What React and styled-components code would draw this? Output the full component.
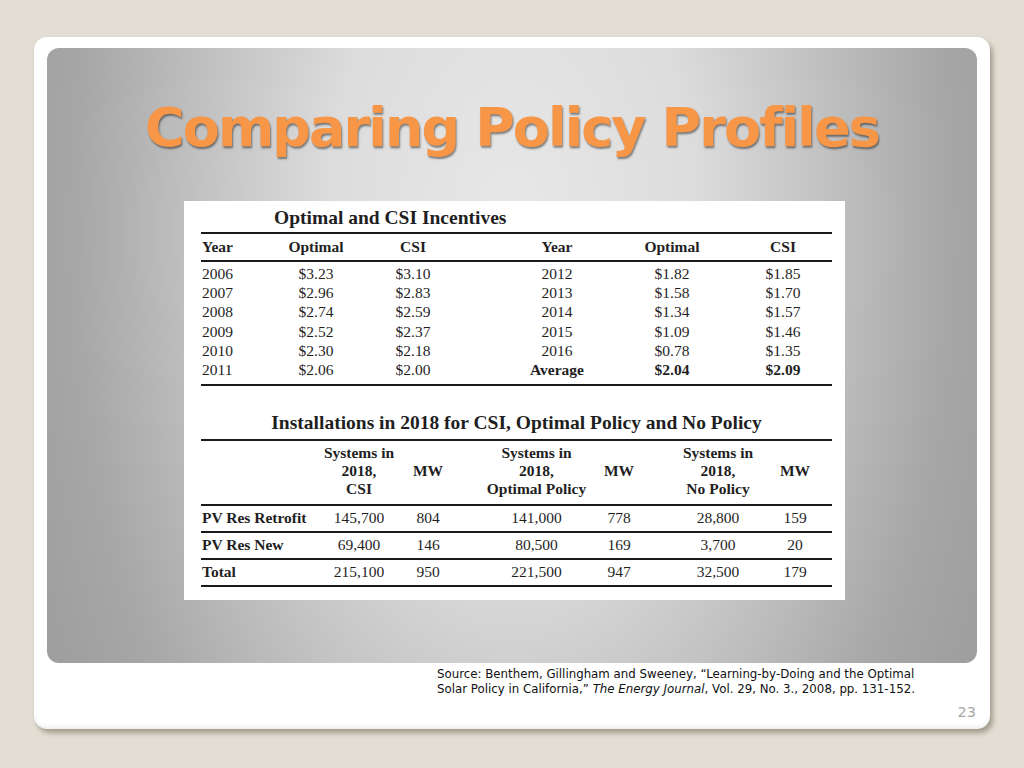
import React from 'react';
import styled, { createGlobalStyle } from 'styled-components';

// left edge of the table rules, page coordinates
const X0 = 201;

// grid template with spacer tracks so every centred column sits on its own centre
const buildGrid = (labelW, cols) => {
    const parts = [`${labelW}px`];
    const index = [];
    let x = X0 + labelW;
    let track = 1;
    cols.forEach(({ c, w }) => {
        const start = c - w / 2;
        if (start - x > 0) {
            parts.push(`${start - x}px`);
            track++;
        }
        parts.push(`${w}px`);
        track++;
        index.push(track);
        x = start + w;
    });
    return { template: parts.join(' ') + ' 1fr', index };
};

const incentiveGrid = buildGrid(75, [
    { c: 316, w: 80 },
    { c: 413, w: 80 },
    { c: 557, w: 80 },
    { c: 672, w: 80 },
    { c: 783, w: 80 },
]);

const installGrid = buildGrid(122, [
    { c: 359, w: 72 },
    { c: 428, w: 60 },
    { c: 536.5, w: 104 },
    { c: 619, w: 60 },
    { c: 718, w: 76 },
    { c: 795, w: 60 },
]);

const incentives = [
    ['2006', '$3.23', '$3.10', '2012', '$1.82', '$1.85'],
    ['2007', '$2.96', '$2.83', '2013', '$1.58', '$1.70'],
    ['2008', '$2.74', '$2.59', '2014', '$1.34', '$1.57'],
    ['2009', '$2.52', '$2.37', '2015', '$1.09', '$1.46'],
    ['2010', '$2.30', '$2.18', '2016', '$0.78', '$1.35'],
    ['2011', '$2.06', '$2.00', 'Average', '$2.04', '$2.09'],
];

const installs = [
    ['PV Res Retrofit', '145,700', '804', '141,000', '778', '28,800', '159'],
    ['PV Res New', '69,400', '146', '80,500', '169', '3,700', '20'],
    ['Total', '215,100', '950', '221,500', '947', '32,500', '179'],
];

const App = () => {
    return (
        <>
            <GlobalStyle />
            <Page>
                <Card>
                    <Panel>
                        <Title>Comparing Policy Profiles</Title>
                        <TableBox>
                            <Caption $indent="73px">Optimal and CSI Incentives</Caption>
                            <Row $cols={incentiveGrid.template} $h="26px" $top $bottom>
                                <Label $bold>Year</Label>
                                {['Optimal', 'CSI', 'Year', 'Optimal', 'CSI'].map((h, i) => (
                                    <Cell key={i} $col={incentiveGrid.index[i]} $bold>
                                        {h}
                                    </Cell>
                                ))}
                            </Row>
                            <Body>
                                {incentives.map((r, ri) => (
                                    <Row key={ri} $cols={incentiveGrid.template} $h="19.2px">
                                        <Label>{r[0]}</Label>
                                        {r.slice(1).map((v, i) => (
                                            <Cell key={i} $col={incentiveGrid.index[i]} $bold={ri === 5 && i >= 2}>
                                                {v}
                                            </Cell>
                                        ))}
                                    </Row>
                                ))}
                            </Body>

                            <Caption $gap="27px" $mb="6px" $center>
                                Installations in 2018 for CSI, Optimal Policy and No Policy
                            </Caption>
                            <Row $cols={installGrid.template} $h="54px" $top $bottom $pad="3px 0 6px">
                                {[
                                    ['Systems in', '2018,', 'CSI'],
                                    ['MW'],
                                    ['Systems in', '2018,', 'Optimal Policy'],
                                    ['MW'],
                                    ['Systems in', '2018,', 'No Policy'],
                                    ['MW'],
                                ].map((lines, i) => (
                                    <Cell key={i} $col={installGrid.index[i]} $bold $lh="18px">
                                        {lines.map((l, li) => (
                                            <div key={li}>{l}</div>
                                        ))}
                                    </Cell>
                                ))}
                            </Row>
                            {installs.map((r, ri) => (
                                <Row key={ri} $cols={installGrid.template} $h="25px" $bottom>
                                    <Label $bold>{r[0]}</Label>
                                    {r.slice(1).map((v, i) => (
                                        <Cell key={i} $col={installGrid.index[i]}>
                                            {v}
                                        </Cell>
                                    ))}
                                </Row>
                            ))}
                        </TableBox>
                    </Panel>
                    <Footer>
                        <Source>
                            Source: Benthem, Gillingham and Sweeney, “Learning-by-Doing and the Optimal
                            <br />
                            Solar Policy in California,” <em>The Energy Journal</em>, Vol. 29, No. 3., 2008, pp. 131-152.
                        </Source>
                        <SlideNo>23</SlideNo>
                    </Footer>
                </Card>
            </Page>
        </>
    );
};

export default App;

const GlobalStyle = createGlobalStyle`
    body {
        margin: 0;
        background: #e2ded3;
    }
`;

const Page = styled.div`
    width: 1024px;
    height: 768px;
    padding: 37px 0 0 34px;
    box-sizing: border-box;
    background: #e2ded3;
`;

const Card = styled.div`
    width: 956px;
    height: 692px;
    box-sizing: border-box;
    padding: 11px 13px 0 13px;
    background: #ffffff;
    border-radius: 13px;
    box-shadow: 3px 4px 5px rgba(70, 60, 40, 0.4), inset 0 -4px 4px -2px rgba(0, 0, 0, 0.08);
    display: flex;
    flex-direction: column;
`;

const Panel = styled.div`
    height: 615px;
    border-radius: 12px;
    background: radial-gradient(520px 900px at 50% 30%, #e8e8e8 0%, #dcdcdc 36%, #c2c2c2 60%, #a7a7a7 84%, #9e9e9e 100%);
    display: flex;
    flex-direction: column;
    align-items: center;
`;

const Title = styled.h1`
    margin: 48px 0 0 0;
    font-family: 'DejaVu Sans', Verdana, sans-serif;
    font-weight: 700;
    font-size: 54px;
    line-height: 64px;
    letter-spacing: -1.9px;
    color: #f79646;
    text-shadow: 1px 2px 2px rgba(0, 0, 0, 0.45);
`;

const TableBox = styled.div`
    align-self: flex-start;
    margin: 41px 0 0 137px;
    width: 661px;
    box-sizing: border-box;
    padding: 7px 13px 13px 17px;
    background: #ffffff;
    font-family: 'Liberation Serif', 'Times New Roman', serif;
    font-size: 15.5px;
    color: #1f1f1f;
`;

const Caption = styled.div`
    margin: ${(p) => p.$gap || '0'} 0 ${(p) => p.$mb || '4px'} 0;
    padding-left: ${(p) => p.$indent || '0'};
    text-align: ${(p) => (p.$center ? 'center' : 'left')};
    font-size: 19.5px;
    font-weight: 700;
    line-height: 20px;
`;

const Row = styled.div`
    display: grid;
    grid-template-columns: ${(p) => p.$cols};
    align-items: center;
    height: ${(p) => p.$h};
    padding: ${(p) => p.$pad || '0'};
    border-top: ${(p) => (p.$top ? '2px solid #1a1a1a' : 'none')};
    border-bottom: ${(p) => (p.$bottom ? '2px solid #1a1a1a' : 'none')};
`;

const Body = styled.div`
    padding: 2.4px 0 4.4px 0;
    border-bottom: 2px solid #1a1a1a;
`;

const Label = styled.div`
    grid-column: 1;
    padding-left: 1px;
    white-space: nowrap;
    font-weight: ${(p) => (p.$bold ? 700 : 400)};
`;

const Cell = styled.div`
    grid-column: ${(p) => p.$col};
    text-align: center;
    white-space: nowrap;
    line-height: ${(p) => p.$lh || 'normal'};
    font-weight: ${(p) => (p.$bold ? 700 : 400)};
`;

const Footer = styled.div`
    flex: 1;
    display: flex;
    flex-direction: column;
    padding: 4px 1px 0 390px;
`;

const Source = styled.div`
    font-family: 'DejaVu Sans', Verdana, sans-serif;
    font-size: 11.8px;
    line-height: 15px;
    color: #111111;
    white-space: nowrap;

    em {
        font-style: italic;
    }
`;

const SlideNo = styled.div`
    margin-top: 8px;
    align-self: flex-end;
    font-family: 'DejaVu Sans', Verdana, sans-serif;
    font-size: 14.5px;
    line-height: 14px;
    color: #a6a6a6;
`;
